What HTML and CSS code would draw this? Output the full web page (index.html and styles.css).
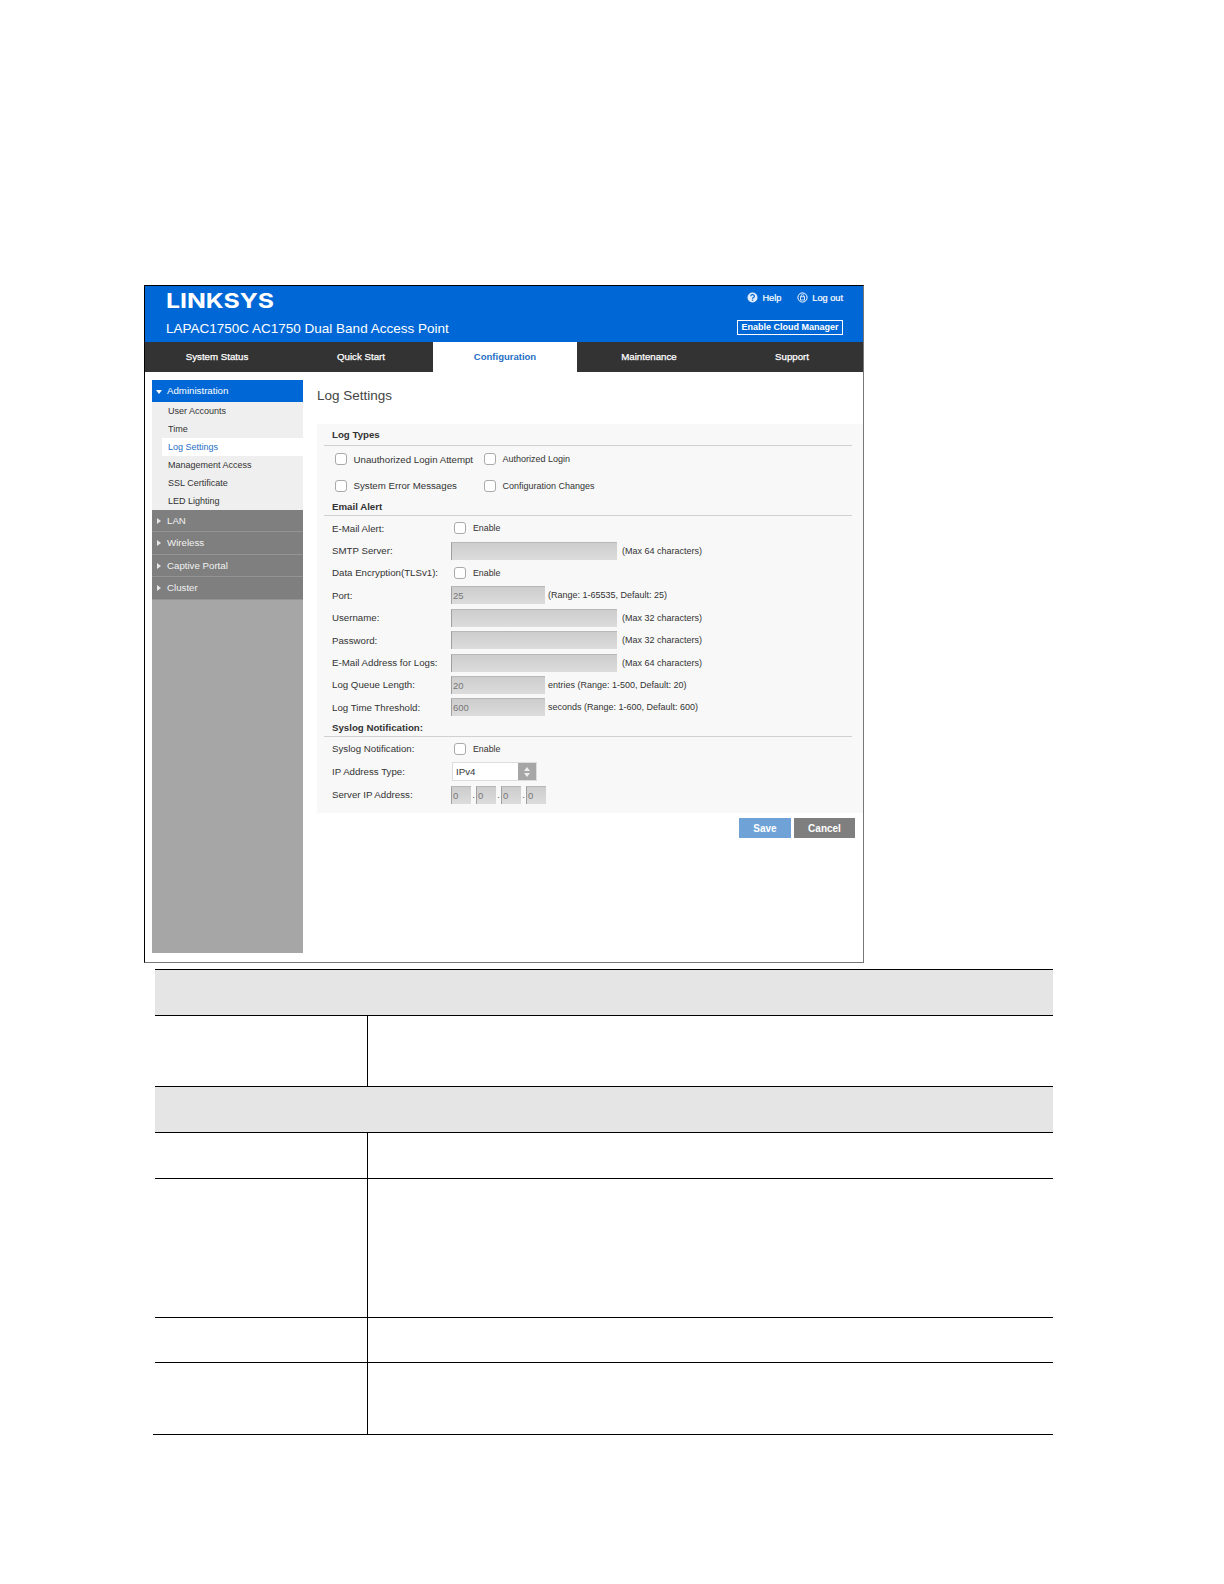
FILE: index.html
```html
<!DOCTYPE html>
<html lang="en">
<head>
<meta charset="utf-8">
<title>Log Settings</title>
<link rel="stylesheet" href="styles.css">
</head>
<body>
<div class="page">
  <div class="shot">
    <header class="hero">
      <div class="hero-row hero-top">
        <svg class="logo" width="110" height="20" viewBox="0 0 110 20"><text x="0" y="17" textLength="108" lengthAdjust="spacingAndGlyphs" class="logo-text">LINKSYS</text></svg>
        <div class="links">
          <span class="link"><svg width="11" height="11" viewBox="0 0 11 11"><circle cx="5.5" cy="5.5" r="5" fill="#dfeafa"/><path d="M3.8 4.2a1.8 1.6 0 1 1 2.6 1.4c-.6.4-.9.6-.9 1.2" fill="none" stroke="#0068d6" stroke-width="1.2"/><rect x="4.9" y="7.6" width="1.2" height="1.2" fill="#0068d6"/></svg>Help</span>
          <span class="link"><svg width="11" height="11" viewBox="0 0 11 11"><circle cx="5.5" cy="5.5" r="4.6" fill="none" stroke="#fff"/><rect x="3.4" y="4.8" width="4.2" height="3.2" fill="none" stroke="#fff" stroke-width=".8"/><path d="M4.2 4.8V3.8a1.3 1.3 0 0 1 2.6 0v1" fill="none" stroke="#fff" stroke-width=".8"/></svg>Log out</span>
        </div>
      </div>
      <div class="hero-row hero-bottom">
        <span class="product">LAPAC1750C AC1750 Dual Band Access Point</span>
        <span class="cloud">Enable Cloud Manager</span>
      </div>
    </header>
    <nav class="nav">
      <span>System Status</span>
      <span>Quick Start</span>
      <span class="nav-active">Configuration</span>
      <span>Maintenance</span>
      <span>Support</span>
    </nav>
    <div class="main">
      <aside class="side">
        <div class="group group-open"><i class="arrow-down"></i>Administration</div>
        <ul class="subs">
          <li>User Accounts</li>
          <li>Time</li>
          <li class="sub-active">Log Settings</li>
          <li>Management Access</li>
          <li>SSL Certificate</li>
          <li>LED Lighting</li>
        </ul>
        <div class="group"><i class="arrow-right"></i>LAN</div>
        <div class="group"><i class="arrow-right"></i>Wireless</div>
        <div class="group"><i class="arrow-right"></i>Captive Portal</div>
        <div class="group"><i class="arrow-right"></i>Cluster</div>
      </aside>
      <section class="content">
        <h1 class="title">Log Settings</h1>
        <div class="panel">
          <h2 class="head head-first">Log Types</h2>
          <div class="types">
            <label class="type"><i class="check"></i>Unauthorized Login Attempt</label>
            <label class="type type-small"><i class="check"></i>Authorized Login</label>
            <label class="type"><i class="check"></i>System Error Messages</label>
            <label class="type type-small"><i class="check"></i>Configuration Changes</label>
          </div>
          <h2 class="head head-email">Email Alert</h2>
          <div class="form form-email">
            <div class="row"><span class="lab">E-Mail Alert:</span><i class="check"></i><span class="en">Enable</span></div>
            <div class="row"><span class="lab">SMTP Server:</span><span class="field long"></span><span class="hint">(Max 64 characters)</span></div>
            <div class="row"><span class="lab">Data Encryption(TLSv1):</span><i class="check"></i><span class="en">Enable</span></div>
            <div class="row"><span class="lab">Port:</span><span class="field short">25</span><span class="hint hint-short">(Range: 1-65535, Default: 25)</span></div>
            <div class="row"><span class="lab">Username:</span><span class="field long"></span><span class="hint">(Max 32 characters)</span></div>
            <div class="row"><span class="lab">Password:</span><span class="field long"></span><span class="hint">(Max 32 characters)</span></div>
            <div class="row"><span class="lab">E-Mail Address for Logs:</span><span class="field long"></span><span class="hint">(Max 64 characters)</span></div>
            <div class="row"><span class="lab">Log Queue Length:</span><span class="field short">20</span><span class="hint hint-short">entries (Range: 1-500, Default: 20)</span></div>
            <div class="row"><span class="lab">Log Time Threshold:</span><span class="field short">600</span><span class="hint hint-short">seconds (Range: 1-600, Default: 600)</span></div>
          </div>
          <h2 class="head head-syslog">Syslog Notification:</h2>
          <div class="form">
            <div class="row row-sys"><span class="lab">Syslog Notification:</span><i class="check"></i><span class="en">Enable</span></div>
            <div class="row row-sys"><span class="lab">IP Address Type:</span><span class="select"><span class="select-value">IPv4</span><span class="select-btn"><i></i><i></i></span></span></div>
            <div class="row row-sys"><span class="lab">Server IP Address:</span><span class="field ip">0</span><span class="dot">.</span><span class="field ip">0</span><span class="dot">.</span><span class="field ip">0</span><span class="dot">.</span><span class="field ip">0</span></div>
          </div>
        </div>
        <div class="actions">
          <span class="btn btn-save">Save</span>
          <span class="btn btn-cancel">Cancel</span>
        </div>
      </section>
    </div>
  </div>
  <div class="table-wrap">
    <table class="info">
      <colgroup><col class="c1"><col></colgroup>
      <tr class="band"><td colspan="2"></td></tr>
      <tr class="r70"><td class="cell-first"></td><td></td></tr>
      <tr class="band"><td colspan="2"></td></tr>
      <tr class="r46"><td class="cell-first"></td><td></td></tr>
      <tr class="r139"><td class="cell-first"></td><td></td></tr>
      <tr class="r45"><td class="cell-first"></td><td></td></tr>
      <tr class="r71"><td class="cell-first"></td><td></td></tr>
    </table>
  </div>
</div>
</body>
</html>
```
FILE: styles.css
```css
* { box-sizing: border-box; }
html, body { margin: 0; background: #fff; }
body { font-family: "Liberation Sans", Arial, sans-serif; font-size: 9.7px; color: #333; }
.page { padding: 285px 0 0 144px; height: 1584px; overflow: hidden; }

.shot { width: 720px; height: 678px; border: 1px solid #000; border-right-color: #777; border-bottom-color: #777; background: #fff; }

.hero { height: 56px; background: #0068d6; color: #fff; padding: 0 20px 0 21px; }
.hero-row { display: flex; justify-content: space-between; align-items: center; }
.hero-top { height: 28px; }
.hero-bottom { height: 28px; }
.logo { display: block; margin-top: 1px; overflow: visible; }
.logo-text { font-family: Inter, sans-serif; font-weight: 700; font-size: 20px; fill: #fff; }
.links { display: flex; gap: 16px; font-size: 9.2px; margin-top: -5px; -webkit-text-stroke: .2px #fff; }
.link { display: flex; align-items: center; gap: 4px; }
.product { font-size: 13.5px; }
.cloud { border: 1px solid #fff; height: 15px; width: 106px; font-size: 9px; font-weight: 700; line-height: 13px; text-align: center; margin-top: -1px; }

.nav { display: grid; grid-template-columns: 144px 144px 144px 144px 1fr; height: 30px; background: #333; color: #fff; font-size: 9.7px; text-align: center; line-height: 30px; -webkit-text-stroke: .25px #fff; }
.nav-active { background: #fff; color: #1f6fc4; font-size: 9.5px; font-weight: 700; -webkit-text-stroke: 0; }

.main { display: flex; padding: 8px 0 0 7px; }
.side { width: 151px; height: 573px; background: #a6a6a6; flex: none; }
.group { height: 22.4px; line-height: 21px; padding-left: 15px; background: #7f7f7f; color: #f2f2f2; border-bottom: 1px solid #949494; position: relative; }
.group-open { background: #0068d6; color: #fff; border: 0; height: 22px; }
.arrow-right { position: absolute; left: 5px; top: 8px; border-left: 4px solid #e6e6e6; border-top: 3px solid transparent; border-bottom: 3px solid transparent; }
.arrow-down { position: absolute; left: 4px; top: 10px; border-top: 4px solid #fff; border-left: 3px solid transparent; border-right: 3px solid transparent; }
.subs { list-style: none; margin: 0; padding: 0; background: #efefef; }
.subs li { height: 18px; line-height: 18px; padding-left: 16px; font-size: 9px; }
.subs .sub-active { margin-left: 10px; padding-left: 6px; background: #fff; color: #1f6fc4; }

.content { flex: 1; padding-left: 14px; min-width: 0; }
.title { margin: 0; height: 44px; font-size: 13.5px; font-weight: 400; line-height: 32px; color: #444; }
.panel { height: 389px; background: #f8f8f8; padding-left: 7px; }
.head { margin: 0 11px 0 0; padding-left: 8px; font-size: 9.7px; font-weight: 700; border-bottom: 1px solid #d0d0d0; }
.head-first { height: 22px; line-height: 22px; }
.head-email { height: 17px; line-height: 16px; }
.head-syslog { height: 18.6px; line-height: 18px; }

.types { display: grid; grid-template-columns: 149px 1fr; grid-auto-rows: 26.5px; padding-left: 10.5px; }
.type { display: flex; align-items: center; gap: 7px; }
.type-small { font-size: 9px; }
.check { display: block; flex: none; width: 12px; height: 12px; border: 1px solid #aaa; border-radius: 3px; background: #fff; }

.form { padding-left: 8px; }
.form-email { padding-top: 1px; }
.row { display: flex; align-items: center; height: 22.4px; }
.row-sys { height: 23px; }
.lab { width: 119px; flex: none; }
.row > .check { margin-left: 3px; }
.en { margin-left: 7px; font-size: 8.8px; }
.field { display: block; height: 18px; line-height: 17px; padding-left: 1px; background: linear-gradient(#cdcdcd, #dcdcdc); border-left: 1px solid #a0a0a0; border-top: 1px solid #b8b8b8; color: #777; font-size: 9.5px; }
.long { width: 166px; }
.short { width: 94px; }
.ip { width: 20px; }
.dot { width: 5px; text-align: center; color: #555; }
.hint { margin-left: 5px; font-size: 9px; }
.hint-short { margin-left: 3px; }
.select { display: flex; width: 85px; height: 19px; margin-left: 1px; background: #fff; border: 1px solid #ddd; }
.select-value { flex: 1; padding-left: 3px; line-height: 17px; }
.select-btn { width: 18px; background: #a6a6a6; display: flex; flex-direction: column; align-items: center; justify-content: center; gap: 2px; }
.select-btn i { display: block; border-left: 3px solid transparent; border-right: 3px solid transparent; }
.select-btn i:first-child { border-bottom: 4px solid #eee; }
.select-btn i:last-child { border-top: 4px solid #eee; }

.actions { display: flex; justify-content: flex-end; gap: 3px; margin-top: 5px; padding-right: 8px; }
.btn { height: 20px; line-height: 21px; text-align: center; color: #fff; font-size: 10px; font-weight: 700; }
.btn-save { width: 52px; background: #6fa3d8; }
.btn-cancel { width: 61px; background: #7f7f7f; }

.table-wrap { width: 900px; margin: 6px 0 0 9px; border-bottom: 1px solid #000; }
.info { width: 898px; margin-left: 2px; border-collapse: collapse; table-layout: fixed; }
.info td { padding: 0; border-top: 1px solid #000; }
.c1 { width: 212px; }
.cell-first { border-right: 1px solid #000; }
.band td { height: 46px; background: #e5e5e5; }
.r70 td { height: 71px; }
.r46 td { height: 46px; }
.r139 td { height: 139px; }
.r45 td { height: 45px; }
.r71 td { height: 71px; }
```
